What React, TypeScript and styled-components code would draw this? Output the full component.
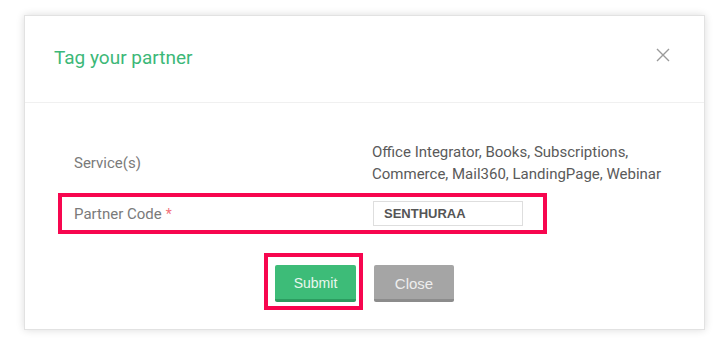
import styled, { createGlobalStyle } from 'styled-components'

const GlobalStyle = createGlobalStyle`
	html, body {
		margin: 0;
		padding: 0;
		background: #ffffff;
		font-family: Roboto, 'Liberation Sans', Arial, sans-serif;
	}
`

const Page = styled.div`
	width: 720px;
	height: 349px;
	padding: 15px 0 0 24px;
	box-sizing: border-box;
	overflow: hidden;
`

const Dialog = styled.div`
	width: 681px;
	height: 315px;
	box-sizing: border-box;
	background: #fff;
	border: 1px solid #e2e2e2;
	box-shadow: 0 0 8px rgba(0, 0, 0, 0.14);
	display: flex;
	flex-direction: column;
`

const Header = styled.div`
	height: 87px;
	flex-shrink: 0;
	display: flex;
	align-items: center;
	justify-content: space-between;
	padding: 0 34px 4px 29px;
	box-sizing: border-box;
	border-bottom: 1px solid #f0f0f0;
`

const Title = styled.h2`
	margin: 0;
	font-size: 19px;
	font-weight: 400;
	color: #3cb878;
`

const CloseIcon = styled.button`
	width: 14px;
	height: 14px;
	padding: 0;
	border: none;
	background: none;
	cursor: pointer;
	display: flex;
	margin-top: -4px;
`

const Body = styled.div`
	padding: 38px 0 0 33px;
	display: flex;
	flex-direction: column;
`

const Row = styled.div<{ $highlight?: boolean }>`
	display: grid;
	grid-template-columns: 298px 1fr;
	align-items: center;
	padding-left: ${(p) => (p.$highlight ? '12px' : '16px')};
	width: ${(p) => (p.$highlight ? '489px' : 'auto')};
	height: ${(p) => (p.$highlight ? '41px' : 'auto')};
	box-sizing: border-box;
	border: ${(p) => (p.$highlight ? '4px solid #f7064f' : 'none')};
	margin-top: ${(p) => (p.$highlight ? '8px' : '0')};
`

const Label = styled.div`
	font-size: 15px;
	color: #7a7a7a;
`

const Required = styled.span`
	color: #f2727a;
	font-size: 14px;
	margin-left: 4px;
`

const Value = styled.div`
	font-size: 15px;
	line-height: 22px;
	color: #5a5a5a;
	width: 310px;
`

const CodeInput = styled.input`
	width: 150px;
	height: 25px;
	box-sizing: border-box;
	margin-left: 1px;
	border: 1px solid #dedede;
	padding: 0 10px;
	font-family: 'Liberation Sans', Arial, sans-serif;
	font-size: 13px;
	font-weight: 700;
	color: #555555;
	outline: none;
`

const Actions = styled.div`
	display: flex;
	justify-content: center;
	gap: 18px;
	margin: 31px 0 0 -33px;
`

const Highlight = styled.div`
	position: relative;
	display: flex;

	&::after {
		content: '';
		position: absolute;
		top: -12px;
		right: -7px;
		bottom: -8px;
		left: -11px;
		border: 4px solid #f7064f;
		pointer-events: none;
	}
`

const Button = styled.button<{ $variant: 'primary' | 'secondary' }>`
	width: ${(p) => (p.$variant === 'primary' ? '81px' : '80px')};
	height: 37px;
	border: none;
	border-radius: 2px;
	border-bottom: 3px solid ${(p) => (p.$variant === 'primary' ? '#2c9c60' : '#8c8c8c')};
	background: ${(p) => (p.$variant === 'primary' ? '#3dbc78' : '#a5a5a5')};
	color: ${(p) => (p.$variant === 'primary' ? '#e9f7ee' : '#eeeeee')};
	font-family: 'Liberation Sans', Arial, sans-serif;
	font-size: ${(p) => (p.$variant === 'primary' ? '14px' : '15px')};
	padding: 2px 0 0;
	cursor: pointer;
`

const App = () => {
	return (
		<>
			<GlobalStyle />
			<Page>
				<Dialog>
					<Header>
						<Title>Tag your partner</Title>
						<CloseIcon aria-label='Close'>
							<svg width='14' height='14' viewBox='0 0 14 14'>
								<path d='M1 1L13 13M13 1L1 13' stroke='#9a9a9a' strokeWidth='1.4' fill='none' />
							</svg>
						</CloseIcon>
					</Header>
					<Body>
						<Row>
							<Label>Service(s)</Label>
							<Value>Office Integrator, Books, Subscriptions, Commerce, Mail360, LandingPage, Webinar</Value>
						</Row>
						<Row $highlight>
							<Label>
								Partner Code<Required>*</Required>
							</Label>
							<div>
								<CodeInput defaultValue='SENTHURAA' />
							</div>
						</Row>
						<Actions>
							<Highlight>
								<Button $variant='primary'>Submit</Button>
							</Highlight>
							<Button $variant='secondary'>Close</Button>
						</Actions>
					</Body>
				</Dialog>
			</Page>
		</>
	)
}

export default App
